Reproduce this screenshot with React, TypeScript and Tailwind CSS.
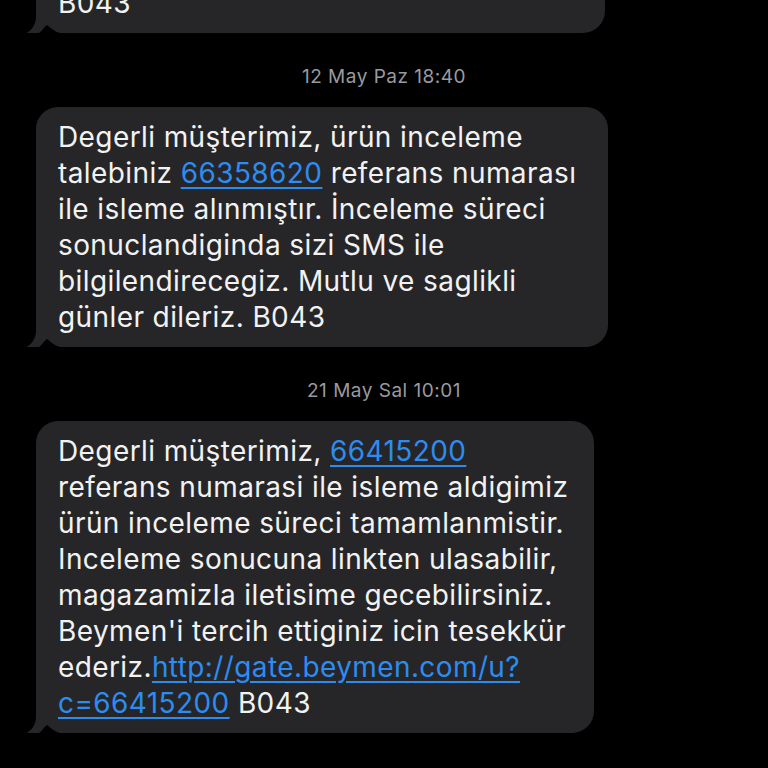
import React from "react";

type Part = { text: string; link?: boolean };
type Line = Part[];

const msg1: Line[] = [
  [{ text: "Degerli müşterimiz, ürün inceleme" }],
  [
    { text: "talebiniz " },
    { text: "66358620", link: true },
    { text: " referans numarası" },
  ],
  [{ text: "ile isleme alınmıştır. İnceleme süreci" }],
  [{ text: "sonuclandiginda sizi SMS ile" }],
  [{ text: "bilgilendirecegiz. Mutlu ve saglikli" }],
  [{ text: "günler dileriz. B043" }],
];

const msg2: Line[] = [
  [{ text: "Degerli müşterimiz, " }, { text: "66415200", link: true }],
  [{ text: "referans numarasi ile isleme aldigimiz" }],
  [{ text: "ürün inceleme süreci tamamlanmistir." }],
  [{ text: "Inceleme sonucuna linkten ulasabilir," }],
  [{ text: "magazamizla iletisime gecebilirsiniz." }],
  [{ text: "Beymen'i tercih ettiginiz icin tesekkür" }],
  [
    { text: "ederiz." },
    { text: "http://gate.beymen.com/u?", link: true },
  ],
  [{ text: "c=66415200", link: true }, { text: " B043" }],
];

function Tail() {
  // iOS style tail at the bottom-left corner of a received bubble
  return (
    <svg
      className="absolute left-[-10px] bottom-0"
      width="40"
      height="20"
      viewBox="0 0 40 20"
    >
      <path d="M10 0 L10 4 C10 11 6 17 0.5 20 L10 20 Z" fill="#262628" />
      <path d="M13 20 C16 18 18 14 21 12 C24 14 27 18 34 20 Z" fill="#000" />
    </svg>
  );
}

function Bubble({ lines, width }: { lines: Line[]; width: string }) {
  return (
    <div
      className={`relative ml-[36px] ${width} rounded-[22px] rounded-bl-none bg-[#262628] pl-[22px] pr-4 py-[12px] text-[28px] leading-[36px] tracking-[0.4px] text-[#f2f2f2]`}
    >
      {lines.map((line, i) => (
        <div key={i} className="whitespace-nowrap">
          {line.map((p, j) =>
            p.link ? (
              <span
                key={j}
                className="text-[#2d8cf0] underline decoration-[1.5px] underline-offset-[4px]"
              >
                {p.text}
              </span>
            ) : (
              <span key={j}>{p.text}</span>
            )
          )}
        </div>
      ))}
      <Tail />
    </div>
  );
}

function Stamp({ children }: { children: React.ReactNode }) {
  return (
    <div className="mt-[34px] mb-[20px] text-center text-[19px] leading-[20px] tracking-[0.5px] text-[#9a9a9e]">
      {children}
    </div>
  );
}

export default function App() {
  return (
    <div
      className="h-[768px] w-[768px] overflow-hidden bg-black"
      style={{ fontFamily: "Inter, 'Noto Sans', sans-serif" }}
    >
      {/* previous message, mostly scrolled off */}
      <div className="relative ml-[36px] mt-[-37px] w-[569px] rounded-[22px] rounded-bl-none bg-[#262628] pl-[22px] pb-[12px] pt-[22px] text-[28px] leading-[36px] tracking-[0.4px] text-[#f2f2f2]">
        <div>B043</div>
        <Tail />
      </div>

      <Stamp>12 May Paz 18:40</Stamp>
      <Bubble lines={msg1} width="w-[572px]" />

      <Stamp>21 May Sal 10:01</Stamp>
      <Bubble lines={msg2} width="w-[558px]" />
    </div>
  );
}
